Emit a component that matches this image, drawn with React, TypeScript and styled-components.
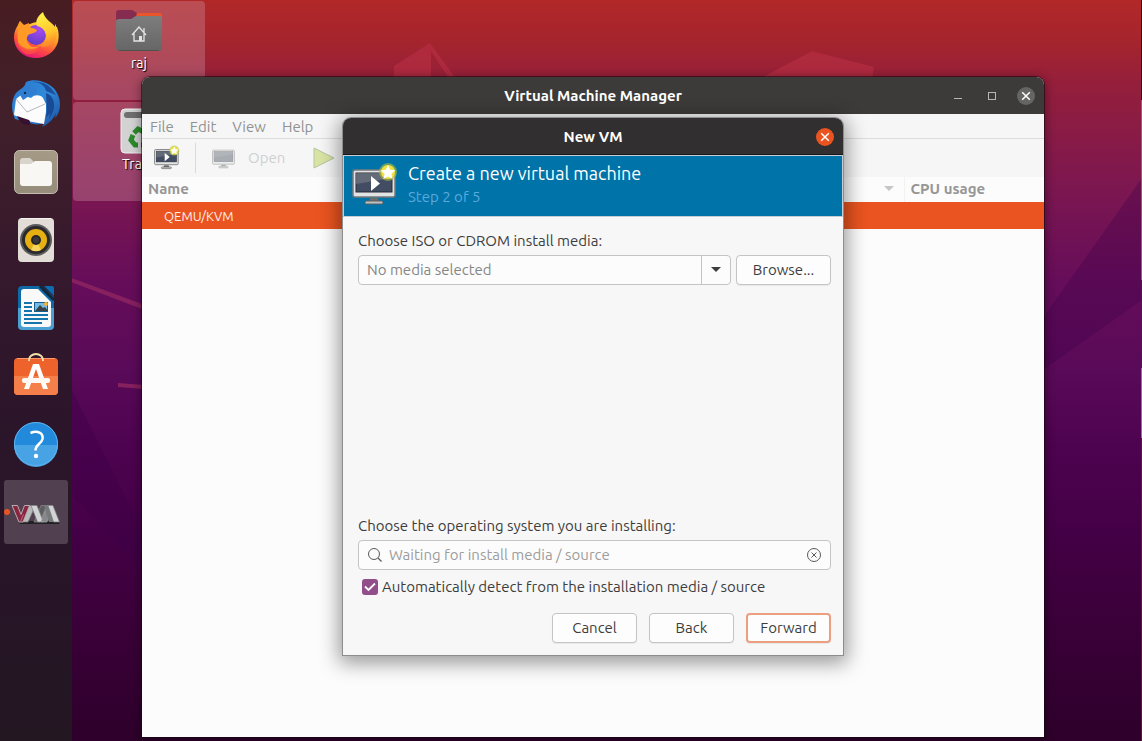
import React from 'react';
import styled, { createGlobalStyle, css } from 'styled-components';

const GlobalStyle = createGlobalStyle`
  *, *::before, *::after { box-sizing: border-box; }
  html, body { margin: 0; padding: 0; }
  body, button, input {
    font-family: Ubuntu, "Noto Sans", "Open Sans", sans-serif;
    font-size: 15px;
    line-height: 20px;
    color: #3d3d3d;
  }
`;

const Screen = styled.div`
  position: relative;
  display: flex;
  min-height: 100vh;
  overflow: hidden;
  background: linear-gradient(
    180deg,
    #b22828 0%, #a4242e 6%, #951f3b 11%, #7d1750 25%, #660d5a 38%,
    #590a58 50%, #4e0350 60%, #440046 72%, #3a0038 85%, #2e002b 100%
  );
`;

const Wallpaper = styled.svg`
  position: absolute;
  top: 0;
  left: 0;
`;

const Dock = styled.nav`
  position: relative;
  display: flex;
  flex-direction: column;
  align-items: center;
  gap: 4px;
  flex: none;
  width: 72px;
  padding-top: 4px;
  background: linear-gradient(180deg, #481d22 0%, #41202a 15%, #36192d 35%, #2c152a 55%, #271527 80%, #231722 100%);
`;

const DockButton = styled.button<{ $active?: boolean }>`
  position: relative;
  display: flex;
  align-items: center;
  justify-content: center;
  width: 64px;
  height: 64px;
  padding: 0;
  border: 0;
  border-radius: 3px;
  background: ${(p) => (p.$active ? '#514150' : 'transparent')};
`;

const RunningDot = styled.span`
  position: absolute;
  left: 0;
  top: 29px;
  width: 6px;
  height: 6px;
  border-radius: 50%;
  background: #e95420;
`;

const Desktop = styled.main`
  position: relative;
  flex: 1;
`;

const DesktopIcons = styled.div`
  display: flex;
  flex-direction: column;
  gap: 2px;
  width: 133px;
  padding: 1px 0 0 1px;
`;

const DesktopIcon = styled.button`
  display: flex;
  flex-direction: column;
  align-items: center;
  height: 99px;
  padding: 4px 0 0;
  border: 0;
  border-radius: 4px;
  font-size: 14px;
  color: #fff;
  text-shadow: 1px 1px 1px #000;
  background: rgba(205, 150, 165, 0.35);
`;

const frame = css`
  display: flex;
  flex-direction: column;
  border-radius: 8px 8px 0 0;
`;

const ManagerWindow = styled.section`
  ${frame}
  position: absolute;
  top: 77px;
  left: 70px;
  right: 98px;
  bottom: 4px;
  background: #fcfcfc;
  box-shadow: 0 0 0 1px rgba(20, 5, 15, 0.55), 0 2px 10px 2px rgba(0, 0, 0, 0.35);
`;

const TitleBar = styled.header<{ $front?: boolean }>`
  display: grid;
  grid-template-columns: 1fr auto 1fr;
  align-items: center;
  height: 37px;
  padding: 0 9px;
  border-radius: 8px 8px 0 0;
  color: #fff;
  background: ${(p) => (p.$front ? '#322f30' : '#3c3b39')};
  ${(p) => p.$front && 'padding-top: 1px; border-bottom: 1px solid #19181a;'}
`;

const Title = styled.h1`
  grid-column: 2;
  margin: 0;
  font-size: 15px;
  line-height: 20px;
  font-weight: 700;
`;

const WindowControls = styled.div`
  display: flex;
  justify-content: flex-end;
  align-items: center;
  gap: 16px;
`;

const WindowButton = styled.button<{ $fill?: string }>`
  display: flex;
  align-items: center;
  justify-content: center;
  width: 18px;
  height: 18px;
  padding: 0;
  border: 0;
  border-radius: 50%;
  background: ${(p) => p.$fill || 'transparent'};
`;

const MenuBar = styled.nav`
  display: flex;
  gap: 16px;
  height: 25px;
  padding: 3px 8px 1px;
  background: #f6f6f6;
  border-bottom: 1px solid #dcdcdc;
`;

const MenuItem = styled.button`
  padding: 0;
  border: 0;
  color: #929292;
  background: none;
`;

const ToolBar = styled.div`
  display: flex;
  align-items: center;
  height: 38px;
  padding: 0 12px;
  background: #f6f6f6;
`;

const ToolButton = styled.button`
  display: flex;
  align-items: center;
  gap: 11px;
  padding: 0;
  border: 0;
  color: #ced1d1;
  background: none;
`;

const Separator = styled.span`
  width: 1px;
  height: 30px;
  margin: 0 16px 0 14px;
  background: #dadada;
`;

const VmTable = styled.table`
  width: 100%;
  border-collapse: collapse;
  table-layout: fixed;
`;

const HeadCell = styled.th<{ $usage?: boolean }>`
  height: 25px;
  padding: 0 6px 2px;
  text-align: left;
  font-size: 15px;
  line-height: 20px;
  font-weight: 700;
  color: #969696;
  ${(p) => p.$usage && 'width: 140px; border-left: 1px solid #f2f2f2;'}
`;

const HeadContent = styled.span`
  display: flex;
  align-items: center;
  justify-content: space-between;
  padding-right: 4px;
`;

const RowCell = styled.td`
  height: 27px;
  padding: 0 22px;
  font-size: 13px;
  line-height: 18px;
  color: #fdeee8;
  background: #e95420;
`;

const ModalLayer = styled.div`
  position: absolute;
  inset: 0;
  display: flex;
  justify-content: center;
  align-items: flex-start;
  padding-top: 41px;
`;

const Dialog = styled.section`
  ${frame}
  width: 500px;
  height: 537px;
  background: #f7f7f7;
  box-shadow: 0 0 0 1px #8d8d8d, 0 4px 20px 4px rgba(0, 0, 0, 0.4);
`;

const Banner = styled.div`
  display: flex;
  gap: 8px;
  height: 62px;
  padding: 6px 8px 0;
  color: #fff;
  background: #0073a9;
  border: 1px solid #c3cdd3;
`;

const BannerTitle = styled.h2`
  margin: 0;
  font-size: 18px;
  line-height: 22px;
  font-weight: 400;
`;

const BannerStep = styled.p`
  margin: 0;
  padding-top: 3px;
  color: #5aa9de;
`;

const Form = styled.form`
  display: flex;
  flex: 1;
  flex-direction: column;
  padding: 14px 12px 12px 15px;
`;

const Field = styled.div`
  display: flex;
  flex-direction: column;
  gap: 4px;
`;

const Spacer = styled.div`
  flex: 1;
`;

const FieldRow = styled.div`
  display: flex;
  gap: 5px;
`;

const InputFrame = styled.div`
  display: flex;
  flex: 1;
  align-items: center;
  height: 30px;
  border: 1px solid #c4c4c4;
  border-radius: 4px;
  background: #fcfcfc;
`;

const TextInput = styled.input`
  flex: 1;
  min-width: 0;
  padding: 0 8px;
  border: 0;
  outline: 0;
  background: transparent;
  &::placeholder { color: #868686; opacity: 1; }
`;

const SearchInput = styled(TextInput)`
  padding: 0 6px;
  &::placeholder { color: #9c9c9c; opacity: 1; }
`;

const SearchFrame = styled(InputFrame)`
  flex: none;
  padding: 0 8px;
`;

const PlainButton = styled.button`
  display: flex;
  align-items: center;
  justify-content: center;
  padding: 0;
  border: 0;
  background: none;
`;

const DropButton = styled(PlainButton)`
  align-self: stretch;
  width: 29px;
  border-left: 1px solid #c4c4c4;
`;

const PushButton = styled.button<{ $default?: boolean; $wide?: boolean }>`
  width: ${(p) => (p.$wide ? 95 : 85)}px;
  height: 30px;
  padding: 0;
  border: ${(p) => (p.$default ? '2px solid #eb9f7f' : '1px solid #c4c4c4')};
  border-radius: 4px;
  background: #fdfdfd;
  box-shadow: 0 1px 1px rgba(0, 0, 0, 0.06);
`;

const CheckRow = styled.label`
  display: flex;
  align-items: center;
  gap: 4px;
  padding: 7px 4px 0;
`;

const CheckBox = styled.input`
  appearance: none;
  width: 16px;
  height: 16px;
  margin: 0;
  border-radius: 3px;
  background: #924d8b;
`;

const CheckWrap = styled.span`
  position: relative;
  display: flex;
  svg { position: absolute; inset: 0; pointer-events: none; }
`;

const Actions = styled.footer`
  display: flex;
  justify-content: flex-end;
  gap: 12px;
  padding-top: 16px;
`;

const CloseGlyph = () => (
  <svg width="10" height="10" viewBox="0 0 10 10" stroke="#fff" strokeWidth="1.5" aria-hidden="true">
    <path d="M1.2 1.2 8.8 8.8M8.8 1.2 1.2 8.8" />
  </svg>
);

const FirefoxIcon = () => (
  <svg width="48" height="48" viewBox="0 0 48 48" aria-hidden="true">
    <defs>
      <linearGradient id="ffBody" x1="0.8" y1="0" x2="0.3" y2="1">
        <stop offset="0" stopColor="#fff044" />
        <stop offset="0.35" stopColor="#ffa624" />
        <stop offset="0.7" stopColor="#ff4b42" />
        <stop offset="1" stopColor="#e5127c" />
      </linearGradient>
      <linearGradient id="ffTail" x1="0.4" y1="0" x2="0.6" y2="1">
        <stop offset="0" stopColor="#fff24a" />
        <stop offset="0.6" stopColor="#ffc52a" />
        <stop offset="1" stopColor="#ff7c2c" />
      </linearGradient>
      <radialGradient id="ffGlobe" cx="0.65" cy="0.2" r="0.9">
        <stop offset="0" stopColor="#a94bf2" />
        <stop offset="1" stopColor="#5b3cc4" />
      </radialGradient>
    </defs>
    <path fill="url(#ffBody)" d="M8 9c1 3 2 4 4 5l6-2c4-2 9-3 13-1 7 3 12 4 14 4 2 5 2 10 1 15-3 10-12 16-22 16C11 46 2 37 2 25 2 20 4 16 6 13Z" />
    <circle cx="24" cy="23" r="10" fill="url(#ffGlobe)" />
    <path fill="url(#ffTail)" d="M31 0c-6 5-8 9-6 14 5 1 9 5 9 10 0 6-4 9-9 10 11 4 20-3 20-14 0-4-1-7-2-8v3C40 10 33 8 31 0Z" />
    <path fill="#ff9a26" d="M6 13 8 9l4 4 5-2c0 3 1 5 4 5l4 2c-1 3-4 3-7 4-4 2-4 6-2 9 2 4 6 5 11 3-5 8-18 5-21-4-1-6 0-12 0-17Z" />
    <path fill="#ff5140" d="M3 22c1 8 6 14 14 15 5 0 9-1 13-4-3 7-10 10-16 9C7 38 3 31 3 22Z" opacity="0.8" />
  </svg>
);

const ThunderbirdIcon = () => (
  <svg width="50" height="50" viewBox="0 0 50 50" aria-hidden="true">
    <defs>
      <linearGradient id="tbBody" x1="0" y1="0" x2="1" y2="1">
        <stop offset="0" stopColor="#2b78cf" />
        <stop offset="0.5" stopColor="#2e8ad8" />
        <stop offset="1" stopColor="#1d4da0" />
      </linearGradient>
    </defs>
    <path fill="url(#tbBody)" d="M15 3c6-3 14-2 20 1 9 4 14 12 14 22 0 5-2 10-5 13l1-5c-2 5-6 10-14 14l3-5c-4 3-10 3-15 1L4 40C0 31 0 21 5 14c3-3 6-5 8-6Z" />
    <path fill="#1b4f9d" d="M22 3c8 0 12 4 13 9l10 4-5-7c-5-5-12-7-18-6Z" />
    <path fill="#194a96" d="M35 14c6 2 9 8 8 15-1 5-3 8-5 11l1-6-4 5 1-8Z" />
    <path fill="#fcfcfc" d="M10 16 20 19c4-4 10-3 12 0l3 6v8l-2 12-17-3L3 36l2-16Z" />
    <path fill="none" stroke="#b5b8bd" strokeWidth="1" d="m5 20 11 13 18-8" />
    <path fill="#2f7ed2" d="M12 8c5-4 11-2 14 4 0 3-4 4-7 4-2 1-3 3-7 5l-3-5Z" />
    <path fill="#381030" d="m6 37 12 4c2 2 1 5-1 5C11 46 8 42 6 37Z" />
    <circle cx="14" cy="14" r="1.2" fill="#0d2c52" />
  </svg>
);

const FilesIcon = () => (
  <svg width="46" height="46" viewBox="0 0 46 46" aria-hidden="true">
    <defs>
      <linearGradient id="fiBg" x1="0" y1="0" x2="0" y2="1">
        <stop offset="0" stopColor="#a59a85" />
        <stop offset="1" stopColor="#958c7b" />
      </linearGradient>
    </defs>
    <rect x="1.500" y="1.500" width="43" height="43" rx="5" fill="url(#fiBg)" stroke="#c4bcae" />
    <path fill="#d9d5cd" d="M7 12a3 3 0 0 1 3-3h7l4 4v8H7Z" />
    <path fill="#f8f7f4" d="M7 15h11l4-3h14a3 3 0 0 1 3 3v19a3 3 0 0 1-3 3H10a3 3 0 0 1-3-3Z" />
  </svg>
);

const SpeakerIcon = () => (
  <svg width="46" height="46" viewBox="0 0 46 46" aria-hidden="true">
    <rect x="5" y="1" width="36" height="44" rx="4" fill="#e2ddd6" />
    <path d="M8 1.500h30" stroke="#f7f5f2" />
    <circle cx="23" cy="23" r="16" fill="#5c5c5e" />
    <circle cx="23" cy="23" r="14" fill="#2b2a2b" />
    <circle cx="23" cy="23" r="11" fill="#e6b012" />
    <path d="M23 23 18 33a11 11 0 0 0 10 0Z" fill="#f7d55c" />
    <circle cx="23" cy="23" r="5" fill="#262526" />
    <circle cx="23" cy="23" r="3" fill="#3a393b" />
  </svg>
);

const WriterIcon = () => (
  <svg width="46" height="46" viewBox="0 0 46 46" aria-hidden="true">
    <path fill="#0f69a5" d="M9 1h20l12 11v11H5V5a4 4 0 0 1 4-4Z" />
    <path fill="#4a9fd3" d="M5 23h36v18a4 4 0 0 1-4 4H9a4 4 0 0 1-4-4Z" />
    <path fill="#f9f9f9" d="M11 4h14l13 13v22a3 3 0 0 1-3 3H11a3 3 0 0 1-3-3V7a3 3 0 0 1 3-3Z" />
    <path fill="#0c6db0" d="M31 1h8a2 2 0 0 1 2 2v8Z" />
    <path d="M27 1 41 15" stroke="#10283c" strokeWidth="3" />
    <path d="M11 18h8M11 22h8M11 26h8M11 30h24M11 34h24M11 38h18" stroke="#1674ad" strokeWidth="2" />
    <rect x="21.500" y="17.500" width="13" height="9" fill="#76b9e2" stroke="#145f93" />
    <path fill="#3b4247" d="m22 26 5-6 3 3 2-1 3 4Z" />
    <circle cx="33" cy="19" r="2" fill="#f3b52d" />
  </svg>
);

const SoftwareIcon = () => (
  <svg width="46" height="46" viewBox="0 2 46 46" aria-hidden="true">
    <rect x="1" y="7" width="44" height="37" rx="4" fill="#ee622b" />
    <path fill="#f47f4a" d="M1 25h44v15a4 4 0 0 1-4 4H5a4 4 0 0 1-4-4Z" />
    <path d="M4 7.500h38" stroke="#f79a70" />
    <path d="M16 10V9a7 6 0 0 1 14 0v1" fill="none" stroke="#f3dfaa" strokeWidth="2" />
    <path d="M20 13h6l9 25h-5l-7-20-7 20h-5Z" fill="#fff" />
    <rect x="9" y="27" width="28" height="5" rx="2" fill="#fff8f2" />
  </svg>
);

const HelpIcon = () => (
  <svg width="46" height="46" viewBox="0 0 46 46" aria-hidden="true">
    <circle cx="23" cy="23" r="22" fill="#2389da" />
    <path d="M1 24a22 22 0 0 0 44 0Z" fill="#48a3e4" />
    <circle cx="23" cy="23" r="21.500" fill="none" stroke="#5fb2ec" />
    <path d="M17.500 12c7-3 13 0 12 6-1 5-7 5-7 11.500" fill="none" stroke="#fff" strokeWidth="2.500" />
    <circle cx="23" cy="35" r="2.200" fill="#fff" />
  </svg>
);

const VmmIcon = () => (
  <svg width="50" height="30" viewBox="0 -6 50 30" aria-hidden="true">
    <path d="M7 18h42l-1 3H9Z" fill="#232024" />
    <path d="M18 2.500h6.500L17 19h-6Z" fill="#b9babb" stroke="#77797b" strokeWidth="0.700" />
    <path d="M30 2.500h5.500L29 19h-6Z" fill="#5c5e60" stroke="#8a8c8d" strokeWidth="0.700" />
    <path d="M20 2.500h6L32.500 19h-6Z" fill="#d2d3d4" stroke="#77797b" strokeWidth="0.700" />
    <path d="M41 2.500 36 19h-6l6-16.500Z" fill="#85878a" stroke="#a5a7a8" strokeWidth="0.700" />
    <path d="M33 2.500h4L42.500 19H38Z" fill="#77797b" />
    <path d="M37 2.500h5L48.500 19h-6Z" fill="#d2d3d4" stroke="#77797b" strokeWidth="0.700" />
    <path d="M1 2.500h5.500l3.500 9 3.500-9h5L12 19H8Z" fill="#8a2540" stroke="#b7aab1" />
    <path d="m9.500 18.500 3-7" stroke="#b86a80" />
  </svg>
);

const HomeFolderIcon = () => (
  <svg width="48" height="48" viewBox="0 0 48 48" aria-hidden="true">
    <defs>
      <linearGradient id="homeFront" x1="0" x2="0" y1="0" y2="1">
        <stop offset="0" stopColor="#7d7d7d" />
        <stop offset="1" stopColor="#666" />
      </linearGradient>
    </defs>
    <path fill="#e9562a" d="M18 8h26a3 3 0 0 1 3 3v8H18Z" />
    <path fill="#852c50" d="M1 8a3 3 0 0 1 3-3h13l5 3-2 7H1Z" />
    <path fill="url(#homeFront)" d="M1 17a3 3 0 0 1 3-3h12l5-3h23a3 3 0 0 1 3 3v29a3 3 0 0 1-3 3H4a3 3 0 0 1-3-3Z" />
    <path d="M4 45.500h40" stroke="#505050" />
    <path d="m17 30 7-8 7 8M19 28.500V36h10v-7.500M29 23v4" fill="none" stroke="#e4e4e4" strokeWidth="1.300" />
    <path d="M24 31h3v5h-3Z" fill="#e4e4e4" />
  </svg>
);

const TrashIcon = () => (
  <svg width="48" height="48" viewBox="0 0 48 48" aria-hidden="true">
    <rect x="6" y="3" width="36" height="44" rx="4" fill="#d2d2d2" stroke="#efefef" />
    <rect x="9" y="6" width="30" height="6" rx="3" fill="#6e6e6e" />
    <g fill="none" stroke="#2c8a2c" strokeWidth="5">
      <path d="m19 27 4-4 6 3" />
      <path d="m18 29-2 5 4 5h3" />
      <path d="m31 29 2 5-4 5h-3" />
    </g>
  </svg>
);

const MonitorIcon = ({ size = 25, star = false, play = false, dim = false }: {
  size?: number; star?: boolean; play?: boolean; dim?: boolean;
}) => (
  <svg width={size} height={size} viewBox="0 0 48 48" opacity={dim ? 0.5 : 1} aria-hidden="true">
    <rect x="1" y="8" width="42" height="27" rx="2" fill="#e2e3e4" stroke="#77797a" strokeWidth="1.500" />
    <rect x="4" y="11" width="36" height="19" fill={dim ? '#5d6674' : '#424c63'} stroke="#272b33" />
    <path d="M4 11h36v5L4 22Z" fill="#7c8087" opacity="0.6" />
    <path d="M18 36h8l1 3H17Z" fill="#6b6c6c" />
    <rect x="13" y="39" width="18" height="3" rx="1.500" fill="#bfc0c1" stroke="#5f6061" />
    {play && <path d="m19 14 9 7.500L19 29Z" fill="#fff" />}
    {star && (
      <>
        <circle cx="36" cy="10" r="9" fill="#b3c33c" opacity="0.6" />
        <circle cx="36" cy="10" r="7" fill="#f3e23c" />
        <path fill="#fff" d="m36 3 2.200 4.700 5.100.6-3.800 3.500 1 5.100-4.500-2.500-4.500 2.500 1-5.100-3.800-3.500 5.100-.6Z" />
      </>
    )}
  </svg>
);

const Runner = styled(ToolButton)`
  margin-left: 28px;
`;

const dockItems = [
  { label: 'Firefox', Icon: FirefoxIcon },
  { label: 'Thunderbird', Icon: ThunderbirdIcon },
  { label: 'Files', Icon: FilesIcon },
  { label: 'Rhythmbox', Icon: SpeakerIcon },
  { label: 'LibreOffice Writer', Icon: WriterIcon },
  { label: 'Ubuntu Software', Icon: SoftwareIcon },
  { label: 'Help', Icon: HelpIcon },
  { label: 'Virtual Machine Manager', Icon: VmmIcon, active: true },
];

export default function App() {
  return (
    <Screen>
      <GlobalStyle />
      <Wallpaper width="1142" height="741" viewBox="0 0 1142 741" aria-hidden="true">
        <path fill="#b52d42" opacity="0.7" d="M394 100V66l36-23 29 40h-7l-21-32v49Z" />
        <path fill="#b52d42" opacity="0.7" d="m750 84 62-33 62 16-6 40Z" />
        <path fill="#86205f" d="m50 270 92 34v5l-92-35Z" />
        <path fill="#86205f" d="m118 383 40 3v4l-40-3Z" />
        <path fill="#3c0049" opacity="0.35" d="m72 390 80 160v30L72 495Z" />
        <path fill="#3c0049" opacity="0.3" d="M1142 178 1040 322v50l102-72Z" />
        <path d="M1141.500 0v100" stroke="#2a1018" />
        <path d="M1141.500 100v180" stroke="#7d6a78" />
        <path d="M1141.500 280v88" stroke="#35283c" />
        <path d="M1141.500 368v70" stroke="#857a90" />
        <path d="M1141.500 438v303" stroke="#5c1c22" />
      </Wallpaper>

      <Dock aria-label="Dock">
        {dockItems.map(({ label, Icon, active }) => (
          <DockButton key={label} type="button" aria-label={label} $active={active}>
            {active && <RunningDot />}
            <Icon />
          </DockButton>
        ))}
      </Dock>

      <Desktop>
        <DesktopIcons>
          <DesktopIcon type="button">
            <HomeFolderIcon />
            raj
          </DesktopIcon>
          <DesktopIcon type="button">
            <TrashIcon />
            Trash
          </DesktopIcon>
        </DesktopIcons>

        <ManagerWindow aria-label="Virtual Machine Manager">
          <TitleBar>
            <Title>Virtual Machine Manager</Title>
            <WindowControls>
              <WindowButton type="button" aria-label="Minimize">
                <svg width="8" height="10" aria-hidden="true"><path d="M0 7.500h8" stroke="#b5b5b3" /></svg>
              </WindowButton>
              <WindowButton type="button" aria-label="Maximize">
                <svg width="8" height="8" aria-hidden="true">
                  <rect x="0.500" y="0.500" width="7" height="7" fill="none" stroke="#b5b5b3" />
                </svg>
              </WindowButton>
              <WindowButton type="button" aria-label="Close window" $fill="#656564">
                <CloseGlyph />
              </WindowButton>
            </WindowControls>
          </TitleBar>
          <MenuBar aria-label="Menu">
            {['File', 'Edit', 'View', 'Help'].map((name) => (
              <MenuItem key={name} type="button">{name}</MenuItem>
            ))}
          </MenuBar>
          <ToolBar>
            <ToolButton type="button" aria-label="Create a new virtual machine">
              <MonitorIcon size={27} star play />
            </ToolButton>
            <Separator />
            <ToolButton type="button">
              <MonitorIcon dim />
              Open
            </ToolButton>
            <Runner type="button" aria-label="Run">
              <svg width="22" height="24" viewBox="0 0 22 24" aria-hidden="true">
                <path d="M1 2v20l20-10Z" fill="#d9e3a4" stroke="#b4c69b" />
              </svg>
            </Runner>
          </ToolBar>
          <VmTable>
            <thead>
              <tr>
                <HeadCell scope="col">
                  <HeadContent>
                    Name
                    <svg width="10" height="6" aria-hidden="true"><path d="M0 0h10L5 5Z" fill="#c6c6c6" /></svg>
                  </HeadContent>
                </HeadCell>
                <HeadCell scope="col" $usage>CPU usage</HeadCell>
              </tr>
            </thead>
            <tbody>
              <tr>
                <RowCell>QEMU/KVM</RowCell>
                <RowCell />
              </tr>
            </tbody>
          </VmTable>

          <ModalLayer>
            <Dialog role="dialog" aria-labelledby="new-vm-title">
              <TitleBar $front>
                <Title id="new-vm-title">New VM</Title>
                <WindowControls>
                  <WindowButton type="button" aria-label="Close dialog" $fill="#e95420">
                    <CloseGlyph />
                  </WindowButton>
                </WindowControls>
              </TitleBar>
              <Banner>
                <MonitorIcon size={48} star play />
                <div>
                  <BannerTitle>Create a new virtual machine</BannerTitle>
                  <BannerStep>Step 2 of 5</BannerStep>
                </div>
              </Banner>
              <Form onSubmit={(e) => e.preventDefault()}>
                <Field>
                  <label htmlFor="media">Choose ISO or CDROM install media:</label>
                  <FieldRow>
                    <InputFrame>
                      <TextInput id="media" type="text" placeholder="No media selected" />
                      <DropButton type="button" aria-label="Show recent media">
                        <svg width="10" height="6" aria-hidden="true"><path d="M0 0h10L5 5Z" fill="#3d3d3d" /></svg>
                      </DropButton>
                    </InputFrame>
                    <PushButton type="button" $wide>Browse...</PushButton>
                  </FieldRow>
                </Field>
                <Spacer />
                <Field>
                  <label htmlFor="os">Choose the operating system you are installing:</label>
                  <SearchFrame>
                    <svg width="16" height="16" viewBox="0 0 16 16" fill="none" stroke="#5a5a5a" aria-hidden="true">
                      <circle cx="7" cy="7" r="5.500" />
                      <path d="m11 11 3.500 3.500" strokeWidth="1.200" />
                    </svg>
                    <SearchInput id="os" type="text" placeholder="Waiting for install media / source" />
                    <PlainButton type="button" aria-label="Clear">
                      <svg width="16" height="16" viewBox="0 0 16 16" fill="none" stroke="#5a5a5a" aria-hidden="true">
                        <circle cx="8" cy="8" r="6.500" />
                        <path d="m5.500 5.500 5 5m0-5-5 5" />
                      </svg>
                    </PlainButton>
                  </SearchFrame>
                </Field>
                <CheckRow>
                  <CheckWrap>
                    <CheckBox type="checkbox" defaultChecked />
                    <svg width="16" height="16" viewBox="0 0 16 16" aria-hidden="true">
                      <path d="m3 7.500 3.500 3.500L13 4.500" fill="none" stroke="#fff" strokeWidth="1.800" />
                    </svg>
                  </CheckWrap>
                  Automatically detect from the installation media / source
                </CheckRow>
                <Actions>
                  <PushButton type="button">Cancel</PushButton>
                  <PushButton type="button">Back</PushButton>
                  <PushButton type="submit" $default>Forward</PushButton>
                </Actions>
              </Form>
            </Dialog>
          </ModalLayer>
        </ManagerWindow>
      </Desktop>
    </Screen>
  );
}
